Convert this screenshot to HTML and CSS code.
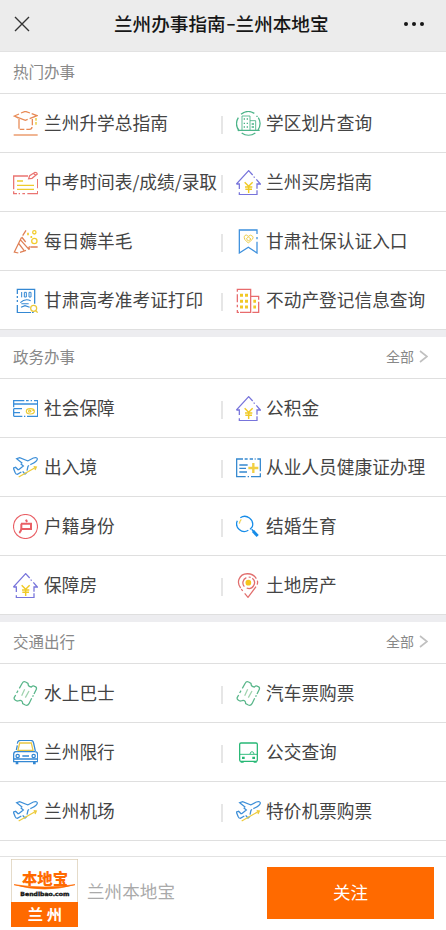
FILE: index.html
```html
<!DOCTYPE html>
<html lang="zh-CN">
<head>
<meta charset="utf-8">
<title>兰州办事指南-兰州本地宝</title>
<link rel="stylesheet" href="styles.css">
</head>
<body>
<svg class="sprite" aria-hidden="true">
  <symbol id="cap" viewBox="0 0 75 75"><g stroke="#e88a55"><path d="M24 6 37 1 51 6M56 8 72 14 50 23M44 25 37 28 4 15 18 9M4 15l11 6M18 24v29M20 55h14M40 55h9q8 0 8-7M58 24v19"/><path d="M2 72h72"/></g><path d="M69 21v8M69 33v8" stroke="#e8c830" stroke-width="4"/></symbol>
  <symbol id="school" viewBox="0 0 75 75"><g stroke="#4cb489"><path d="M15 10A35 35 0 0 1 55 7M67 20A35 35 0 0 1 66 57M58 66A35 35 0 0 1 17 66M10 60A35 35 0 0 1 7 20M5 58h66"/><path d="M18 57V15h24v42M42 29h17v28" stroke-width="2.6"/><path d="M23 24h4M32 24h4M23 37h4M32 37h4M23 48h4M32 48h4M47 39h7M47 48h7" stroke-width="4"/><path d="M63 14v4" stroke-width="4"/></g></symbol>
  <symbol id="note" viewBox="0 0 75 75"><g stroke="#ea7471"><path d="M45 18H2v40M2 64v7h10M17 71h4M28 71h8M43 71h31v-8M74 55V27"/><path d="m47 26 3-9 16-10q6 0 7 5L57 25zM62 10l6 7"/></g><path d="M12 33h18M12 46h51M36 46h27M12 58h51" stroke="#edcb2d"/></symbol>
  <symbol id="house" viewBox="0 0 75 75"><g stroke="#7774db"><path d="M1 42 38 2 50 15M53 20l3 3M61 28l12 14H63v14M63 61v13H10v-7M10 57V42H1"/></g><path d="M26 37 38 49 50 37M38 49v20M27 51h22M28 58h20" stroke="#f0ca26" stroke-width="4.4"/></symbol>
  <symbol id="party" viewBox="0 0 75 75"><g stroke="#df8056"><path d="m39 4-10 16M25 26 4 69l12 3M21 70l18-6M16 42l17 22M21 31l25 28 4-7M26 24l12 15M52 54h22M46 61l5-2"/></g><g stroke="#f2cc2c"><circle cx="64" cy="10" r="5"/><circle cx="64" cy="36" r="8"/><path d="M45 11v8M55 21v6" stroke-width="5"/></g></symbol>
  <symbol id="ribbon" viewBox="0 0 75 75"><path d="M63 15V3H10v69l27-17 26 17V38M63 24v7" stroke="#3d90dd"/><g stroke="#edcd48" stroke-width="3"><path d="M37 42 26 31Q22 19 31 18L37 22q7-7 13 0 3 4-1 9zM31 29l6-5 8 6-8 6z"/></g></symbol>
  <symbol id="exam" viewBox="0 0 75 75"><g stroke="#3488d3"><path d="M13 18V4h52v43M13 24v6M13 36v6M13 51v23h41M57 74h5"/><path d="M26 12v16M34 13h6v14h-6zM48 13h6v14h-6z" stroke-width="3"/><path d="M22 44q14-14 31-6M25 47h22M24 58l12-5 14 5" stroke-width="3.2"/></g><g stroke="#eac83a"><circle cx="62" cy="61" r="9"/><path d="m68 68 6 6"/></g></symbol>
  <symbol id="building" viewBox="0 0 75 75"><g stroke="#e86b6d"><path d="M4 11V4h40v69H12M4 66v7h5M4 19v24M4 50v8M44 25h24v10M68 41v32H49M68 46v7"/></g><path d="M12 22h9M27 22h9M12 40h9M27 40h9M12 57h9M27 57h9M52 40h8M52 57h8" stroke="#f1c925" stroke-width="9"/></symbol>
  <symbol id="card" viewBox="0 0 75 75"><g stroke="#378dda"><path d="M34 14H2v10h72v37H42M39 14h8M53 14h4M63 14h11v9M2 24v10M2 38h25M2 50h19M2 61h26M2 38v23M33 61h4"/></g><g stroke="#eccb36" stroke-width="3.6"><ellipse cx="52" cy="46" rx="12" ry="8"/><path d="M46 46q5-7 8 0-5 5-8 0M58 43h5"/></g></symbol>
  <symbol id="plane" viewBox="0 0 75 75"><g stroke="#3d8fd8"><path d="M28 25 11 11l9-3 25 10M44 18 61 9q12-3 12 3 0 7-17 15l-4 2M48 31 45 34l-3 13M42 52l-6 5-7-8M25 51 13 58q-5 0-7-6L1 39l7-2 8 8M16 45l15-12-8-7"/></g><path d="m17 66 53-30M62 35l8 1-4 9" stroke="#edcb3c"/></symbol>
  <symbol id="health" viewBox="0 0 75 75"><g stroke="#3488cf"><path d="M21 12H2v53h27M35 65h4M45 65h28V55M73 49V12h-9M26 12h9M41 12h10M56 12h3M10 30h25M10 40h20M10 51h23"/></g><path d="M52 24v30M37 39h30" stroke="#f1cf43" stroke-width="7"/></symbol>
  <symbol id="household" viewBox="0 0 75 75"><circle cx="37.5" cy="37.5" r="36" stroke="#e95f65" stroke-width="3.4"/><path d="m39 17 3 7M24 29h30v16H24M25 29v14q0 9-6 14" stroke="#e95f65" stroke-width="6"/></symbol>
  <symbol id="search" viewBox="0 0 75 75"><g stroke="#168ce8"><path d="M13 11A24 24 0 0 1 49 38L42 46M37 49A23 23 0 0 1 4 20"/><path d="m47 46 7 7" stroke-width="4.5"/><path d="m51 51 14 15" stroke-width="9"/></g><path d="M10 29q1-8 6-13" stroke="#efd151"/></symbol>
  <symbol id="pin" viewBox="0 0 75 75"><g stroke="#e16e6d"><path d="M61 17C50-3 17-3 9 19q-5 13 5 26M16 48l4 6M26 61l10 12 24-32M64 23q2 7-1 12"/><path d="M31 14A17 17 0 0 0 25 41M32 45A17 17 0 0 0 49 16M44 13l-6-1"/></g><circle cx="37" cy="29" r="8.5" fill="#f5c51d" stroke="none"/></symbol>
  <symbol id="ticket" viewBox="0 0 75 75"><g stroke="#59b68a"><path d="M19 22 28 6Q31 0 38 3L45 7Q45 18 55 18 60 13 65 16 72 18 70 25L63 39M61 43l-2 4M56 52l-8 16Q44 75 37 72L29 68Q29 56 18 59L12 60Q1 56 4 49L8 42M11 36l4-7"/></g><path d="m35 25-9 19M48 30 37 50" stroke="#a0d3ae"/></symbol>
  <symbol id="car" viewBox="0 0 75 75"><g stroke="#3488d3"><path d="M13 11q1-10 10-10h30q8 0 9 9l5 23M10 30l3-14M8 35h58q8 0 8 9v21H2V43q0-7 6-8M28 48h20M2 57h72"/><circle cx="14" cy="48" r="5"/><circle cx="62" cy="48" r="5"/><path d="M12 64v9M64 64v9" stroke-width="8"/></g><path d="M15 31 20 9h35l5 22z" stroke="#e8c746"/></symbol>
  <symbol id="bus" viewBox="0 0 75 75"><g stroke="#27b875"><rect x="11" y="9" width="53" height="55" rx="4"/><path d="M12 43h51M42 42q1-7 6-7 5 0 6 7" stroke-width="2.8"/><path d="M22 50v7M53 50v7" stroke-width="8"/><path d="M14 66h9M53 66h9" stroke-width="5"/></g></symbol>
</svg>

<header class="topbar">
  <svg class="close" viewBox="0 0 16 16"><path d="M1 1 15 15M15 1 1 15"/></svg>
  <h1 class="title">兰州办事指南<span class="dash">-</span>兰州本地宝</h1>
  <div class="more"><i></i><i></i><i></i></div>
</header>

<main class="content">
  <section class="group">
    <div class="group-head"><h2>热门办事</h2></div>
    <div class="grid">
      <a class="item"><svg class="icon"><use href="#cap"/></svg><span>兰州升学总指南</span></a>
      <a class="item"><svg class="icon"><use href="#school"/></svg><span>学区划片查询</span></a>
      <a class="item"><svg class="icon"><use href="#note"/></svg><span>中考时间表/成绩/录取</span></a>
      <a class="item"><svg class="icon"><use href="#house"/></svg><span>兰州买房指南</span></a>
      <a class="item"><svg class="icon"><use href="#party"/></svg><span>每日薅羊毛</span></a>
      <a class="item"><svg class="icon"><use href="#ribbon"/></svg><span>甘肃社保认证入口</span></a>
      <a class="item"><svg class="icon"><use href="#exam"/></svg><span>甘肃高考准考证打印</span></a>
      <a class="item"><svg class="icon"><use href="#building"/></svg><span>不动产登记信息查询</span></a>
    </div>
  </section>

  <section class="group">
    <div class="group-head"><h2>政务办事</h2><a class="all">全部<svg viewBox="0 0 9 13"><path d="m1 1 7 5.5L1 12"/></svg></a></div>
    <div class="grid">
      <a class="item"><svg class="icon"><use href="#card"/></svg><span>社会保障</span></a>
      <a class="item"><svg class="icon"><use href="#house"/></svg><span>公积金</span></a>
      <a class="item"><svg class="icon"><use href="#plane"/></svg><span>出入境</span></a>
      <a class="item"><svg class="icon"><use href="#health"/></svg><span>从业人员健康证办理</span></a>
      <a class="item"><svg class="icon"><use href="#household"/></svg><span>户籍身份</span></a>
      <a class="item"><svg class="icon"><use href="#search"/></svg><span>结婚生育</span></a>
      <a class="item"><svg class="icon"><use href="#house"/></svg><span>保障房</span></a>
      <a class="item"><svg class="icon"><use href="#pin"/></svg><span>土地房产</span></a>
    </div>
  </section>

  <section class="group">
    <div class="group-head"><h2>交通出行</h2><a class="all">全部<svg viewBox="0 0 9 13"><path d="m1 1 7 5.5L1 12"/></svg></a></div>
    <div class="grid">
      <a class="item"><svg class="icon"><use href="#ticket"/></svg><span>水上巴士</span></a>
      <a class="item"><svg class="icon"><use href="#ticket"/></svg><span>汽车票购票</span></a>
      <a class="item"><svg class="icon"><use href="#car"/></svg><span>兰州限行</span></a>
      <a class="item"><svg class="icon"><use href="#bus"/></svg><span>公交查询</span></a>
      <a class="item"><svg class="icon"><use href="#plane"/></svg><span>兰州机场</span></a>
      <a class="item"><svg class="icon"><use href="#plane"/></svg><span>特价机票购票</span></a>
    </div>
  </section>
</main>

<footer class="follow">
  <svg class="logo" viewBox="0 0 201 204">
    <rect x="1" y="1" width="199" height="202" fill="#fff" stroke="#d9c9ae" stroke-width="2"/>
    <path d="M0 129h201v75H0z" fill="#ff6a00"/>
    <text class="logo-name" x="33" y="76" textLength="138">本地宝</text>
    <path d="M9 77Q101 103 192 77 101 91 9 77Z" fill="#ff6a00" stroke="#ff6a00" stroke-width="2"/>
    <text class="logo-site" x="28" y="112" textLength="147" lengthAdjust="spacingAndGlyphs">Bendibao.com</text>
    <text class="logo-city" x="50" y="183">兰</text>
    <text class="logo-city" x="107" y="183">州</text>
  </svg>
  <span class="account">兰州本地宝</span>
  <button class="button">关注</button>
</footer>
</body>
</html>
```
FILE: styles.css
```css
* { box-sizing: border-box; }

body {
  margin: 0;
  width: 446px;
  height: 930px;
  overflow: hidden;
  display: flex;
  flex-direction: column;
  background: #fff;
  color: #444;
  font-family: "Noto Sans CJK SC", sans-serif;
}

h1, h2 { margin: 0; font-weight: 400; }

.sprite { display: none; }

.topbar {
  flex: none;
  height: 52px;
  padding: 0 22px 4px 14px;
  display: flex;
  align-items: center;
  background: #ececec;
  border-bottom: 1px solid #e2e2e2;
}

.close { width: 16px; height: 16px; fill: none; stroke: #333; stroke-width: 1.4; }

.title {
  flex: 1;
  padding: 0 0 2px 84px;
  color: #161616;
  font-size: 18.6px;
  line-height: 28px;
  font-weight: 500;
  white-space: nowrap;
}

.dash { display: inline-block; width: 10px; text-align: center; transform: translateY(-1px) scaleX(1.5); }

.more { display: flex; gap: 4px; }
.more i { width: 4px; height: 4px; border-radius: 50%; background: #161616; }

.content { flex: none; height: 804px; }

.group + .group { border-top: 7px solid #ededf0; }

.group-head {
  height: 42px;
  padding: 0 18px 3px 13px;
  display: flex;
  align-items: center;
  justify-content: space-between;
  border-bottom: 1px solid #dfdfdf;
}

.group-head h2 { font-size: 15.5px; line-height: 22px; color: #888; }

.all {
  display: flex;
  align-items: center;
  gap: 5px;
  font-size: 14px;
  line-height: 20px;
  color: #888;
}

.all svg { width: 9px; height: 13px; fill: none; stroke: #c0c0c0; stroke-width: 1.6; }

.grid { display: grid; grid-template-columns: 223px 223px; grid-auto-rows: 59px; }

.item {
  display: flex;
  align-items: center;
  gap: 6px;
  padding-left: 13px;
  border-bottom: 1px solid #dfdfdf;
  font-size: 17.7px;
  line-height: 26px;
  white-space: nowrap;
}

.item span { flex: 1; min-width: 0; padding-bottom: 2px; }
.item:nth-child(even) span { margin-left: -1px; }

.item:nth-child(odd)::after {
  content: "";
  flex: none;
  width: 2px;
  height: 18px;
  margin: 3px 0 0 -6px;
  background: #e6e6e6;
}

.icon { flex: none; width: 25px; height: 25px; fill: none; stroke-width: 3.8; overflow: visible; }

.follow {
  flex: none;
  height: 74px;
  display: flex;
  align-items: center;
  padding: 0 12px 2px 11px;
  border-top: 1px solid #e2e2e2;
}

.logo { width: 67px; height: 68px; }
.logo-name { font-size: 46px; font-weight: 900; fill: #ff6a00; }
.logo-site { font: 900 17px "DejaVu Sans", sans-serif; fill: #111; stroke: #111; stroke-width: 1; }
.logo-city { font-size: 46px; font-weight: 700; fill: #fff; }

.account { flex: 1; margin-left: 9px; padding-bottom: 3px; font-size: 17.6px; line-height: 26px; color: #aaa; }

.button {
  width: 167px;
  height: 52px;
  border: 0;
  padding: 0 0 2px;
  background: #ff6a00;
  color: #fff;
  font-family: inherit;
  font-size: 17.5px;
}
```
